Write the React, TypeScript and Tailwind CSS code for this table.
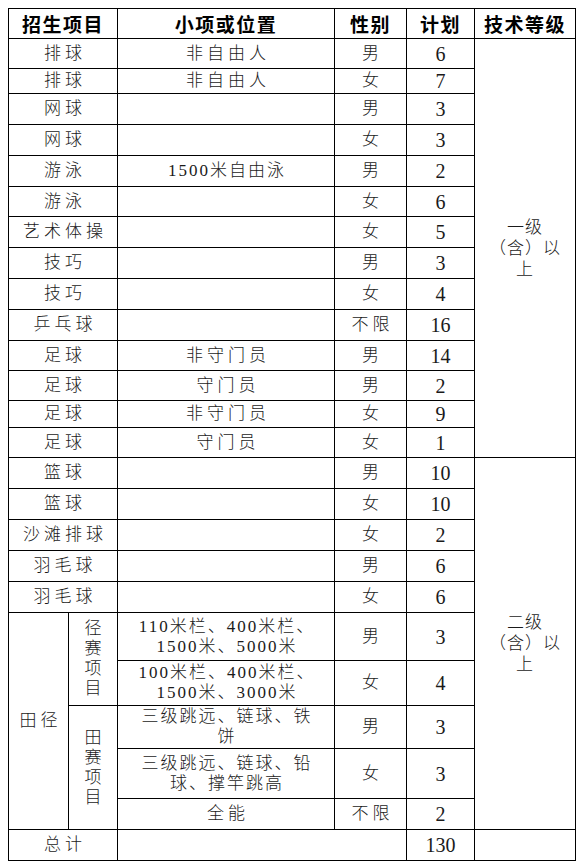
import React from "react";

const body = "font-['Liberation_Serif','Noto_Sans_CJK_SC',serif] text-[#1a1a1a]";
const cell = "border border-black p-0 text-center align-middle";

const rows = [
  { h: "h-[30px]", name: "排球", sub: "非自由人", sex: "男", plan: "6" },
  { h: "h-[25px]", name: "排球", sub: "非自由人", sex: "女", plan: "7" },
  { h: "h-[31px]", name: "网球", sub: "", sex: "男", plan: "3" },
  { h: "h-[31px]", name: "网球", sub: "", sex: "女", plan: "3" },
  { h: "h-[31px]", name: "游泳", sub: "1500米自由泳", sex: "男", plan: "2" },
  { h: "h-[30px]", name: "游泳", sub: "", sex: "女", plan: "6" },
  { h: "h-[31px]", name: "艺术体操", sub: "", sex: "女", plan: "5" },
  { h: "h-[31px]", name: "技巧", sub: "", sex: "男", plan: "3" },
  { h: "h-[31px]", name: "技巧", sub: "", sex: "女", plan: "4" },
  { h: "h-[31px]", name: "乒乓球", sub: "", sex: "不限", plan: "16" },
  { h: "h-[30px]", name: "足球", sub: "非守门员", sex: "男", plan: "14" },
  { h: "h-[30px]", name: "足球", sub: "守门员", sex: "男", plan: "2" },
  { h: "h-[27px]", name: "足球", sub: "非守门员", sex: "女", plan: "9" },
  { h: "h-[30px]", name: "足球", sub: "守门员", sex: "女", plan: "1" },
  { h: "h-[31px]", name: "篮球", sub: "", sex: "男", plan: "10" },
  { h: "h-[31px]", name: "篮球", sub: "", sex: "女", plan: "10" },
  { h: "h-[31px]", name: "沙滩排球", sub: "", sex: "女", plan: "2" },
  { h: "h-[31px]", name: "羽毛球", sub: "", sex: "男", plan: "6" },
  { h: "h-[31px]", name: "羽毛球", sub: "", sex: "女", plan: "6" },
];

function Level({ first }: { first: string }) {
  return (
    <div className="leading-[21px] text-[17px] tracking-[1px]">
      {first}
      <br />
      （含）以
      <br />
      上
    </div>
  );
}

function Vertical({ text }: { text: string }) {
  return (
    <div className="flex flex-col items-center leading-[20px] text-[17px]">
      {text.split("").map((c, i) => (
        <span key={i}>{c}</span>
      ))}
    </div>
  );
}

function Sub({ lines }: { lines: string[] }) {
  return (
    <div className="leading-[20px] text-[17px] tracking-[2px] pl-[2px]">
      {lines.map((l, i) => (
        <div key={i}>{l}</div>
      ))}
    </div>
  );
}

export default function App() {
  return (
    <div className="bg-white min-h-[867px] pl-[8px] pt-[8px]">
      <table className={`border-collapse table-fixed w-[567px] ${body}`}>
        <colgroup>
          <col className="w-[60px]" />
          <col className="w-[49px]" />
          <col className="w-[217px]" />
          <col className="w-[72px]" />
          <col className="w-[68px]" />
          <col className="w-[101px]" />
        </colgroup>
        <thead>
          <tr className="h-[30px] font-['Noto_Sans_CJK_SC',sans-serif] font-bold text-[19px] leading-[20px] tracking-[1.5px] text-black">
            <th colSpan={2} className={cell}>招生项目</th>
            <th className={cell}>小项或位置</th>
            <th className={cell}>性别</th>
            <th className={cell}>计划</th>
            <th className={cell}>技术等级</th>
          </tr>
        </thead>
        <tbody className="text-[17px] leading-[20px] font-light">
          {rows.map((r, i) => (
            <tr key={i} className={r.h}>
              <td colSpan={2} className={`${cell} tracking-[4px] pl-[4px]`}>{r.name}</td>
              <td className={`${cell} ${r.sub.match(/\d/) ? "tracking-[2px] pl-[2px]" : "tracking-[4px] pl-[4px]"}`}>{r.sub}</td>
              <td className={`${cell} tracking-[4px] pl-[4px]`}>{r.sex}</td>
              <td className={`${cell} text-[20px]`}>{r.plan}</td>
              {i === 0 && (
                <td rowSpan={14} className={cell}>
                  <Level first="一级" />
                </td>
              )}
              {i === 14 && (
                <td rowSpan={10} className={cell}>
                  <Level first="二级" />
                </td>
              )}
            </tr>
          ))}
          <tr className="h-[48px]">
            <td rowSpan={5} className={`${cell} tracking-[4px] pl-[4px]`}>田径</td>
            <td rowSpan={2} className={cell}>
              <Vertical text="径赛项目" />
            </td>
            <td className={cell}>
              <Sub lines={["110米栏、400米栏、", "1500米、5000米"]} />
            </td>
            <td className={cell}>男</td>
            <td className={`${cell} text-[20px]`}>3</td>
          </tr>
          <tr className="h-[45px]">
            <td className={cell}>
              <Sub lines={["100米栏、400米栏、", "1500米、3000米"]} />
            </td>
            <td className={cell}>女</td>
            <td className={`${cell} text-[20px]`}>4</td>
          </tr>
          <tr className="h-[43px]">
            <td rowSpan={3} className={cell}>
              <Vertical text="田赛项目" />
            </td>
            <td className={cell}>
              <Sub lines={["三级跳远、链球、铁", "饼"]} />
            </td>
            <td className={cell}>男</td>
            <td className={`${cell} text-[20px]`}>3</td>
          </tr>
          <tr className="h-[50px]">
            <td className={cell}>
              <Sub lines={["三级跳远、链球、铅", "球、撑竿跳高"]} />
            </td>
            <td className={cell}>女</td>
            <td className={`${cell} text-[20px]`}>3</td>
          </tr>
          <tr className="h-[31px]">
            <td className={`${cell} tracking-[4px] pl-[4px]`}>全能</td>
            <td className={`${cell} tracking-[4px] pl-[4px]`}>不限</td>
            <td className={`${cell} text-[20px]`}>2</td>
          </tr>
          <tr className="h-[31px]">
            <td colSpan={2} className={`${cell} tracking-[4px] pl-[4px]`}>总计</td>
            <td colSpan={2} className={cell}></td>
            <td className={`${cell} text-[20px]`}>130</td>
            <td className={cell}></td>
          </tr>
        </tbody>
      </table>
    </div>
  );
}
